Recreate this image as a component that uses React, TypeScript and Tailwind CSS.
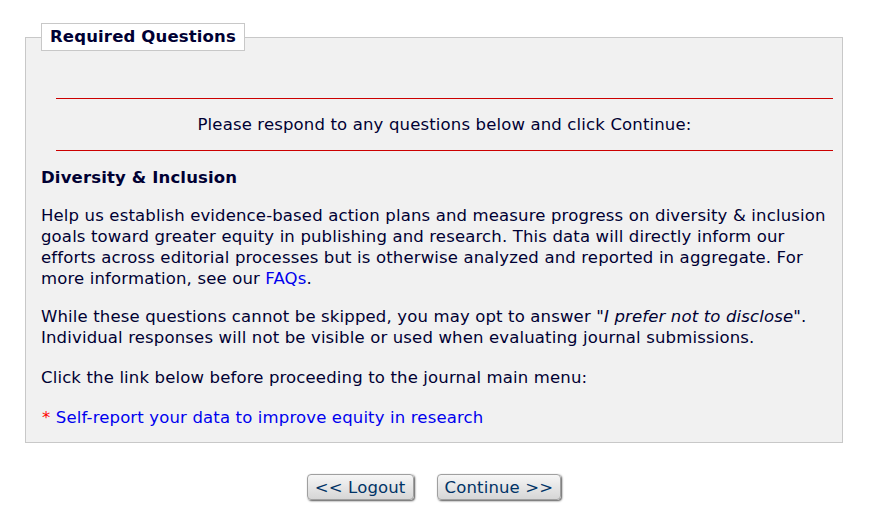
export default function App() {
  return (
    <div
      className="min-h-screen bg-white text-[16.5px] leading-[21px] tracking-[0.15px] text-[#000033]"
      style={{ fontFamily: '"DejaVu Sans", Verdana, sans-serif' }}
    >
      <fieldset className="mx-[25px] mt-[23px] w-[818px] border border-[#c8c8c8] bg-[#f1f1f1] pl-[15px] pr-[9px] pb-[14px]">
        <legend className="border border-[#c8c8c8] bg-white px-[8px] py-[3px] font-bold leading-[20px]">
          Required Questions
        </legend>
        <div className="ml-[15px] mt-[47px]">
          <div className="h-px bg-[#cc0000]" />
          <div className="py-[15px] text-center">Please respond to any questions below and click Continue:</div>
          <div className="h-px bg-[#cc0000]" />
        </div>
        <h2 className="mt-[16px] font-bold">Diversity &amp; Inclusion</h2>
        <p className="mt-[17px]">
          Help us establish evidence-based action plans and measure progress on diversity &amp; inclusion goals toward
          greater equity in publishing and research. This data will directly inform our efforts across editorial
          processes but is otherwise analyzed and reported in aggregate. For more information, see our{' '}
          <a href="#" className="text-[#0000ee]">FAQs</a>.
        </p>
        <p className="mt-[17px]">
          While these questions cannot be skipped, you may opt to answer <i>"I prefer not to disclose"</i>. Individual
          responses will not be visible or used when evaluating journal submissions.
        </p>
        <p className="mt-[19px]">Click the link below before proceeding to the journal main menu:</p>
        <p className="mt-[19px]">
          <span className="ml-[1px] text-[#ff0000]">*</span>{' '}
          <a href="#" className="text-[#0000ee]">Self-report your data to improve equity in research</a>
        </p>
      </fieldset>
      <div className="ml-[25px] mt-[31px] flex w-[818px] justify-center gap-[23px]">
        <button className="h-[26px] rounded-[4px] border border-[#a0a0a0] bg-gradient-to-b from-[#f6f6f6] to-[#d6d6d6] px-[7px] text-[#003366] shadow-[1px_1px_2px_#555]">
          &lt;&lt; Logout
        </button>
        <button className="h-[26px] rounded-[4px] border border-[#a0a0a0] bg-gradient-to-b from-[#f6f6f6] to-[#d6d6d6] px-[7px] text-[#003366] shadow-[1px_1px_2px_#555]">
          Continue &gt;&gt;
        </button>
      </div>
    </div>
  )
}
